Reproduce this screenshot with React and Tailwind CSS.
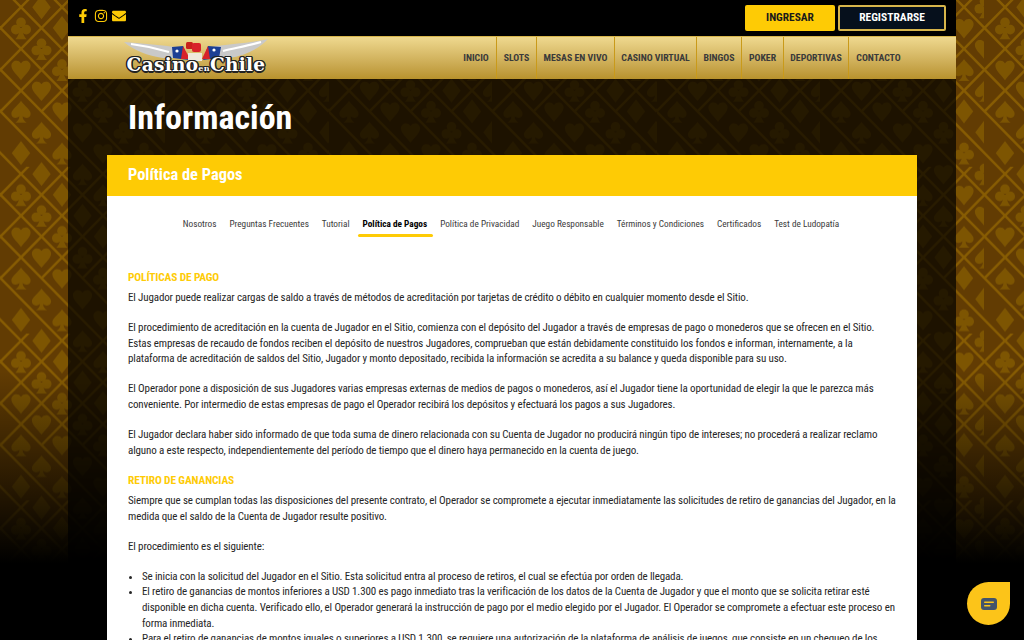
import React from "react";
import { FaFacebookF, FaInstagram, FaEnvelope } from "react-icons/fa";

const Suit = ({ k, x, y, c }) => {
  const t = `translate(${x} ${y}) scale(0.8)`;
  if (k === "d") return <path transform={t} d="M0-15L11.5 0 0 15-11.5 0Z" fill={c} />;
  if (k === "h") return <path transform={t} d="M0 13C-5 6-12 1-12-5c0-6 8-9 12-3 4-6 12-3 12 3C12 1 5 6 0 13Z" fill={c} />;
  if (k === "s") return <path transform={t} d="M0-13C5-6 12-2 12 3c0 5-6 7-10 3 0 4 2 6 5 8H-7c3-2 5-4 5-8-4 4-10 2-10-3C-12-2-5-6 0-13Z" fill={c} />;
  return (
    <g transform={t} fill={c}>
      <circle cx="0" cy="-7" r="6" />
      <circle cx="-6.5" cy="2" r="6" />
      <circle cx="6.5" cy="2" r="6" />
      <path d="M-2 0H2C2 7 4 11 7 14H-7C-4 11-2 7-2 0Z" />
    </g>
  );
};

const SX = 20.5;
const SY = 20.85;
const order = ["c", "h", "s", "d"];
const cells = [];
for (let col = 0; col < 8; col++) {
  for (let row = 0; row < 4; row++) {
    const y = (28 + col * SY + row * 2 * SY) % (8 * SY);
    cells.push({ k: order[row], x: 21 + col * SX, y });
  }
}
const latticeD = [];
for (let n = -8; n < 12; n++) {
  const x0 = 0.5 + n * 2 * SX;
  latticeD.push(`M${x0 - 4 * SX} ${28 - 4 * SY}L${x0 + 12 * SX} ${28 + 12 * SY}`);
  latticeD.push(`M${x0 - 4 * SX} ${28 + 4 * SY}L${x0 + 12 * SX} ${28 - 12 * SY}`);
}

const PatternBg = () => (
  <svg className="absolute inset-0 w-full h-full" aria-hidden="true">
    <defs>
      <pattern id="suits" x="0" y="0" width={8 * SX} height={8 * SY} patternUnits="userSpaceOnUse">
        <rect width={8 * SX} height={8 * SY} fill="#623c03" />
        <path d={latticeD.join("")} stroke="#875c03" strokeWidth="2.4" fill="none" />
        {cells.map((s) => (
          <g key={`${s.x}-${s.y}`}>
            <Suit k={s.k} x={s.x} y={s.y} c="#7d5502" />
            {s.y < 20 && <Suit k={s.k} x={s.x} y={s.y + 8 * SY} c="#7d5502" />}
            {s.y > 8 * SY - 20 && <Suit k={s.k} x={s.x} y={s.y - 8 * SY} c="#7d5502" />}
          </g>
        ))}
      </pattern>
    </defs>
    <rect width="100%" height="100%" fill="url(#suits)" />
  </svg>
);

const Logo = () => (
  <div className="relative w-[146px] h-[36px] -mt-[4px]">
    <svg viewBox="0 0 146 36" className="absolute inset-0 w-full h-full" aria-hidden="true">
      <path d="M1 4C18 5 36 7 52 9L62 20 40 20C25 18 10 12 1 4Z" fill="#c9c9c9" />
      <path d="M145 1C127 5 110 6 92 8L84 20 106 20C121 18 136 11 145 1Z" fill="#c9c9c9" />
      <path d="M8 6C24 8 36 11 46 14M138 4C124 8 112 10 100 13" stroke="#fff" strokeWidth="2.2" fill="none" />
      <path d="M49 9L60 8 66 22 50 20Z" fill="#1c3f94" />
      <path d="M98 9L85 8 80 22 96 20Z" fill="#1c3f94" />
      <path d="M58 21L60 8 67 21Z" fill="#d8232a" />
      <path d="M87 21L85 8 79 21Z" fill="#d8232a" />
      <circle cx="54" cy="13" r="1.6" fill="#fff" />
      <circle cx="91" cy="12" r="1.6" fill="#fff" />
      <rect x="63" y="4" width="7" height="7" rx="1.5" fill="#c8201c" />
      <rect x="69" y="5" width="9" height="9" rx="2" fill="#d8232a" />
      <rect x="65" y="15" width="14" height="8" fill="#efe9dc" />
    </svg>
    <div className="absolute left-0 bottom-0 w-full flex justify-center items-baseline whitespace-nowrap font-['DejaVu_Serif',serif] [font-stretch:100%] font-bold text-white leading-none text-[18.5px] tracking-[0.3px] [text-shadow:1.5px_0_0_#222,-1.5px_0_0_#222,0_1.5px_0_#222,0_-1px_0_#222,1px_1px_0_#222,-1px_-1px_0_#222,1px_-1px_0_#222,-1px_1px_0_#222]">
      Casino<span className="text-[8px]">en</span>Chile
    </div>
  </div>
);

const navItems = [
  ["INICIO", "w-[40px]"],
  ["SLOTS", "w-[40px]"],
  ["MESAS EN VIVO", "w-[78px]"],
  ["CASINO VIRTUAL", "w-[82px]"],
  ["BINGOS", "w-[45px]"],
  ["POKER", "w-[42px]"],
  ["DEPORTIVAS", "w-[65px]"],
  ["CONTACTO", "w-[60px]"],
];
const tabs = [
  "Nosotros",
  "Preguntas Frecuentes",
  "Tutorial",
  "Política de Pagos",
  "Política de Privacidad",
  "Juego Responsable",
  "Términos y Condiciones",
  "Certificados",
  "Test de Ludopatía",
];

const Lines = ({ lines }) => (
  <p className="mb-[14.3px]">
    {lines.map((l) => (
      <span key={l} className="block whitespace-nowrap">{l}</span>
    ))}
  </p>
);

const H = ({ children }) => (
  <h3 className="text-[#fecb05] font-bold text-[11.4px] mb-[4.3px] leading-[15.7px] whitespace-nowrap">{children}</h3>
);

export default function App() {
  return (
    <div className="relative h-[640px] w-[1024px] overflow-hidden bg-black font-['Roboto',sans-serif] [font-stretch:75%]">
      <PatternBg />
      <div className="absolute inset-0 bg-gradient-to-b from-transparent from-[58%] to-black to-[88%]" />
      <div className="relative mx-auto w-[888px] h-full bg-black/70">
        <header className="relative h-[36px] bg-black flex items-center justify-between pl-[8px] pr-[10px]">
          <div className="flex items-center gap-[4px] text-[#fecb05] -mt-[4px]">
            <FaFacebookF className="w-[14px] h-[14px]" />
            <FaInstagram className="w-[14px] h-[14px]" />
            <FaEnvelope className="w-[14px] h-[14px]" />
          </div>
          <div className="flex gap-[3px]">
            <div className="w-[90px] h-[26px] rounded-[2px] bg-[#fecb05] text-[#1a1a1a] text-[11.4px] font-bold flex items-center justify-center">INGRESAR</div>
            <div className="w-[108px] h-[26px] rounded-[2px] bg-[#06101c] border-2 border-[#d7b54a] text-white text-[11.5px] font-bold flex items-center justify-center">REGISTRARSE</div>
          </div>
        </header>
        <nav className="relative h-[43px] bg-gradient-to-b from-[#efd98f] to-[#b8922c] border-t border-[#d7b54a] flex items-center justify-between pl-[55px] pr-[48px]">
          <Logo />
          <ul className="flex h-full text-[#3a3a3a] text-[9.8px] font-bold">
            {navItems.map(([n, w], i) => (
              <li key={n} className={`${w} flex items-center justify-center whitespace-nowrap ${i ? "border-l border-[#c99a1a]" : ""}`}>{n}</li>
            ))}
          </ul>
        </nav>
        <section className="relative pl-[60px] pt-[17px] h-[76px]">
          <h1 className="text-white font-bold text-[34px] leading-[42px]">Información</h1>
        </section>
        <main className="relative mx-[39px] w-[810px] h-[700px] bg-white">
          <div className="h-[41px] bg-[#fecb05] flex items-center pl-[21px] text-white font-bold text-[16.4px]">Política de Pagos</div>
          <div className="flex justify-center pt-[17px] gap-[13px] text-[#3b3b3b] text-[9.25px] pr-[2px]">
            {tabs.map((t) => (
              <div key={t} className={`relative whitespace-nowrap leading-[22px] ${t === "Política de Pagos" ? "font-bold text-black" : ""}`}>
                {t}
                {t === "Política de Pagos" && (
                  <span className="absolute -left-[5px] -right-[6px] top-[21px] h-[3px] rounded-sm bg-[#fecb05]" />
                )}
              </div>
            ))}
          </div>
          <article className="px-[21px] pt-[35px] text-[#262626] text-[11px] tracking-[-0.135px] leading-[15.7px]">
            <H>POLÍTICAS DE PAGO</H>
            <Lines lines={["El Jugador puede realizar cargas de saldo a través de métodos de acreditación por tarjetas de crédito o débito en cualquier momento desde el Sitio."]} />
            <Lines lines={[
              "El procedimiento de acreditación en la cuenta de Jugador en el Sitio, comienza con el depósito del Jugador a través de empresas de pago o monederos que se ofrecen en el Sitio.",
              "Estas empresas de recaudo de fondos reciben el depósito de nuestros Jugadores, comprueban que están debidamente constituido los fondos e informan, internamente, a la",
              "plataforma de acreditación de saldos del Sitio, Jugador y monto depositado, recibida la información se acredita a su balance y queda disponible para su uso.",
            ]} />
            <Lines lines={[
              "El Operador pone a disposición de sus Jugadores varias empresas externas de medios de pagos o monederos, así el Jugador tiene la oportunidad de elegir la que le parezca más",
              "conveniente. Por intermedio de estas empresas de pago el Operador recibirá los depósitos y efectuará los pagos a sus Jugadores.",
            ]} />
            <Lines lines={[
              "El Jugador declara haber sido informado de que toda suma de dinero relacionada con su Cuenta de Jugador no producirá ningún tipo de intereses; no procederá a realizar reclamo",
              "alguno a este respecto, independientemente del período de tiempo que el dinero haya permanecido en la cuenta de juego.",
            ]} />
            <H>RETIRO DE GANANCIAS</H>
            <Lines lines={[
              "Siempre que se cumplan todas las disposiciones del presente contrato, el Operador se compromete a ejecutar inmediatamente las solicitudes de retiro de ganancias del Jugador, en la",
              "medida que el saldo de la Cuenta de Jugador resulte positivo.",
            ]} />
            <Lines lines={["El procedimiento es el siguiente:"]} />
            <ul className="list-disc pl-[14px]">
              <li className="whitespace-nowrap">Se inicia con la solicitud del Jugador en el Sitio. Esta solicitud entra al proceso de retiros, el cual se efectúa por orden de llegada.</li>
              <li className="whitespace-nowrap">
                El retiro de ganancias de montos inferiores a USD 1.300 es pago inmediato tras la verificación de los datos de la Cuenta de Jugador y que el monto que se solicita retirar esté<br />
                disponible en dicha cuenta. Verificado ello, el Operador generará la instrucción de pago por el medio elegido por el Jugador. El Operador se compromete a efectuar este proceso en<br />
                forma inmediata.
              </li>
              <li className="whitespace-nowrap">Para el retiro de ganancias de montos iguales o superiores a USD 1.300, se requiere una autorización de la plataforma de análisis de juegos, que consiste en un chequeo de los</li>
            </ul>
          </article>
        </main>
      </div>
      <div className="absolute left-[967px] top-[582px] w-[43px] h-[43px] bg-[#fcc419] rounded-full rounded-tr-[4px] flex items-center justify-center">
        <svg width="16" height="12" viewBox="0 0 16 12" aria-hidden="true">
          <rect width="16" height="12" rx="3" fill="#44546a" />
          <rect x="3" y="3.5" width="10" height="1.5" rx=".7" fill="#fcc419" />
          <rect x="3" y="7" width="6.5" height="1.5" rx=".7" fill="#fcc419" />
        </svg>
      </div>
    </div>
  );
}
